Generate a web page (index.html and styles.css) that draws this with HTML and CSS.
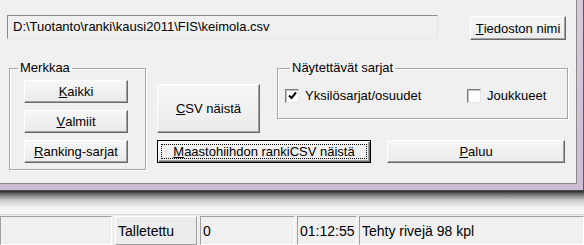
FILE: index.html
```html
<!DOCTYPE html>
<html lang="fi">
<head>
    <meta charset="UTF-8">
    <title>CSV</title>
    <link rel="stylesheet" href="styles.css">
</head>
<body>
    <div class="frame">
        <div class="window">
            <div class="row-file">
                <div class="path-field">D:\Tuotanto\ranki\kausi2011\FIS\keimola.csv</div>
                <button class="btn btn-file"><u>T</u>iedoston nimi</button>
            </div>
            <div class="row-main">
                <fieldset class="group group-mark">
                    <legend>Merkkaa</legend>
                    <button class="btn btn-mark"><u>K</u>aikki</button>
                    <button class="btn btn-mark"><u>V</u>almiit</button>
                    <button class="btn btn-mark"><u>R</u>anking-sarjat</button>
                </fieldset>
                <div class="right-area">
                    <div class="right-top">
                        <button class="btn btn-csv"><u>C</u>SV näistä</button>
                        <fieldset class="group group-show">
                            <legend>Näytettävät sarjat</legend>
                            <label class="check check-first">
                                <span class="box">
                                    <svg width="9" height="9" viewBox="0 0 9 9"><path d="M1 4.5 L3.5 7 L8 1.5" fill="none" stroke="#000" stroke-width="2"/></svg>
                                </span>
                                Yksilösarjat/osuudet
                            </label>
                            <label class="check">
                                <span class="box"></span>
                                Joukkueet
                            </label>
                        </fieldset>
                    </div>
                    <div class="right-bottom">
                        <button class="btn btn-default btn-ski"><span class="focus"><u>M</u>aastohiihdon rankiCSV näistä</span></button>
                        <button class="btn btn-back"><u>P</u>aluu</button>
                    </div>
                </div>
            </div>
        </div>
    </div>
    <div class="shadow"></div>
    <div class="statusbar">
        <div class="panel panel-empty"></div>
        <div class="panel panel-raised panel-saved">Talletettu</div>
        <div class="panel panel-count">0</div>
        <div class="panel panel-time">01:12:55</div>
        <div class="panel panel-msg">Tehty rivejä 98 kpl</div>
    </div>
</body>
</html>
```

FILE: styles.css
```css
* {
    margin: 0;
    padding: 0;
    box-sizing: border-box;
    font-family: "Liberation Sans", Arial, sans-serif;
}
body {
    width: 584px;
    height: 245px;
    overflow: hidden;
    background: #f0f0f0;
    color: #000;
    font-size: 13px;
}
.frame {
    width: 584px;
    background: linear-gradient(#d7c9dc, #cdbcd4);
    padding: 0 6px 6px 0;
    border-right: 1px solid #5a5a5a;
    border-bottom: 1px solid #4a4a4a;
}
.window {
    width: 577px;
    height: 184px;
    background: #f0f0f0;
    border-right: 1px solid #8a8a8a;
    border-bottom: 1px solid #8a8a8a;
    padding: 15px 0 0 7px;
}
.row-file {
    display: flex;
    align-items: flex-start;
}
.path-field {
    width: 431px;
    height: 24px;
    line-height: 22px;
    padding-left: 5px;
    border: 1px solid;
    border-color: #8c8c8c #e8e8e8 #e8e8e8 #8c8c8c;
    white-space: nowrap;
}
.btn {
    display: flex;
    align-items: center;
    justify-content: center;
    background: linear-gradient(#f6f6f6, #ebebeb);
    border: 1px solid;
    border-color: #fff #696969 #696969 #fff;
    box-shadow: inset -1px -1px #a0a0a0;
    font-size: 13px;
    color: #000;
    height: 23px;
}
.btn-file {
    width: 96px;
    height: 24px;
    margin: 1px 0 0 32px;
}
.row-main {
    display: flex;
    align-items: flex-start;
    margin-top: 21px;
}
.group {
    border: 1px solid #a6a6a6;
    box-shadow: 1px 1px #fff, inset 1px 1px #fff;
}
.group legend {
    line-height: 14px;
    padding: 0 2px;
    margin-left: -6px;
}
.group-mark {
    width: 137px;
    margin-left: 2px;
    padding: 5px 16px 6px 14px;
    display: flex;
    flex-direction: column;
    gap: 7px;
}
.btn-mark {
    width: 104px;
}
.right-area {
    margin-left: 11px;
}
.right-top {
    display: flex;
    align-items: flex-start;
}
.btn-csv {
    width: 103px;
    height: 49px;
    margin-top: 23px;
}
.group-show {
    width: 291px;
    height: 58px;
    margin-left: 17px;
    padding: 13px 0 0 7px;
    display: flex;
    align-items: flex-start;
}
.group-show legend {
    margin-left: 5px;
}
.check {
    display: flex;
    align-items: center;
    gap: 6px;
    height: 15px;
}
.check-first {
    width: 182px;
}
.box {
    width: 14px;
    height: 14px;
    background: #fff;
    border: 1px solid;
    border-color: #7a7a7a #e6e6e6 #e6e6e6 #7a7a7a;
    box-shadow: inset 1px 1px #c4c4c4;
    display: flex;
    align-items: center;
    justify-content: center;
}
.right-bottom {
    display: flex;
    margin-top: 7px;
}
.btn-default {
    border: 1px solid #000;
    box-shadow: inset 1px 1px #fff, inset -1px -1px #696969, inset -2px -2px #a0a0a0;
    padding: 3px;
}
.btn-ski {
    width: 214px;
}
.focus {
    flex: 1;
    height: 100%;
    display: flex;
    align-items: center;
    justify-content: center;
    border: 1px dotted #000;
}
.btn-back {
    width: 178px;
    margin-left: 16px;
}
.shadow {
    height: 23px;
    background: linear-gradient(#2a2a2a 0, #6a6a6a 3px, #c8c8c8 9px, #f2f2f2 16px, #f8f8f8 23px);
}
.statusbar {
    display: flex;
    gap: 3px;
    border-top: 1px solid #dadada;
    padding-top: 1px;
    height: 31px;
    background: #f0f0f0;
}
.panel {
    height: 29px;
    border: 1px solid;
    border-color: #a0a0a0 #fff #fff #a0a0a0;
    font-size: 14px;
    line-height: 29px;
    padding-left: 2px;
    white-space: nowrap;
}
.panel-raised {
    border-color: #fff #a0a0a0 #a0a0a0 #fff;
    background: #ececec;
}
.panel-empty {
    width: 112px;
}
.panel-saved {
    width: 82px;
}
.panel-count {
    width: 95px;
}
.panel-time {
    width: 60px;
    margin-left: -1px;
}
.panel-msg {
    flex: 1;
    margin-left: -1px;
}
```
